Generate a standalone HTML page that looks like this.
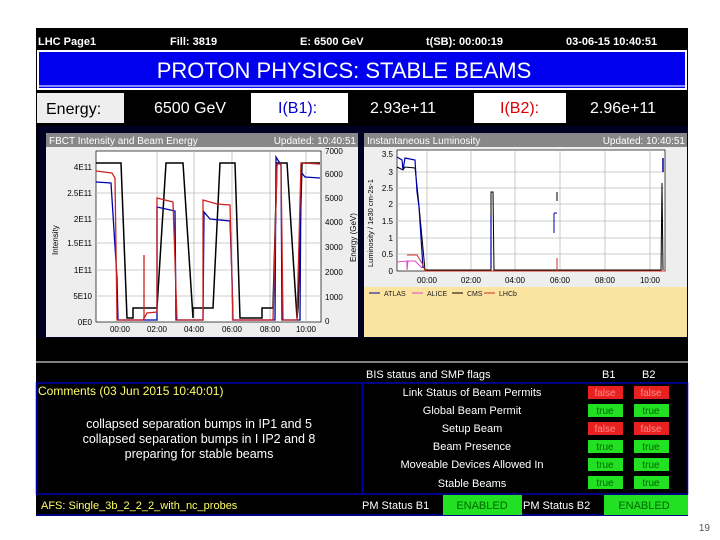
<!DOCTYPE html>
<html><head><meta charset="utf-8"><style>
body{margin:0;width:720px;height:540px;background:#fff;overflow:hidden;font-family:"Liberation Sans",sans-serif}
svg{position:absolute;left:0;top:0}
text{font-family:"Liberation Sans",sans-serif}
</style></head><body>
<svg width="720" height="540" viewBox="0 0 720 540">
<rect x="36" y="28" width="652" height="488" fill="#000"/>
<g fill="#fff" font-size="11" font-weight="bold">
<text x="38" y="45">LHC Page1</text>
<text x="170" y="45">Fill: 3819</text>
<text x="300" y="45">E:  6500 GeV</text>
<text x="426" y="45">t(SB): 00:00:19</text>
<text x="566" y="45">03-06-15 10:40:51</text>
</g>
<rect x="37" y="50" width="650" height="40" fill="#fff"/>
<rect x="39" y="52" width="646" height="36" fill="#0000ee"/>
<rect x="39" y="85" width="646" height="2" fill="#8888ff"/>
<text x="344" y="78" fill="#fff" font-size="22" text-anchor="middle">PROTON PHYSICS: STABLE BEAMS</text>
<rect x="37" y="93" width="87" height="30" fill="#eee"/>
<text x="46" y="114" font-size="16" fill="#000">Energy:</text>
<text x="154" y="113" font-size="16" fill="#fff">6500 GeV</text>
<rect x="251" y="93" width="97" height="30" fill="#fff"/>
<text x="278" y="113" font-size="16" fill="#0000cc">I(B1):</text>
<text x="370" y="113" font-size="16" fill="#fff">2.93e+11</text>
<rect x="474" y="93" width="92" height="30" fill="#fff"/>
<text x="500" y="113" font-size="16" fill="#dd0000">I(B2):</text>
<text x="590" y="113" font-size="16" fill="#fff">2.96e+11</text>
<rect x="38" y="126" width="650" height="212" fill="#000022"/>
<rect x="46" y="133" width="312" height="204" fill="#eee"/>
<rect x="46" y="133" width="312" height="14" fill="#888"/>
<text x="49" y="144" font-size="10" fill="#fff">FBCT Intensity and Beam Energy</text>
<text x="356" y="144" font-size="10" fill="#fff" text-anchor="end">Updated: 10:40:51</text>
<rect x="96" y="151" width="225" height="171" fill="#fff" stroke="#000" stroke-width="0.7"/>
<g stroke="#bbb" stroke-width="0.8">
<line x1="157" y1="151" x2="157" y2="322"/><line x1="194" y1="151" x2="194" y2="322"/><line x1="232" y1="151" x2="232" y2="322"/><line x1="270" y1="151" x2="270" y2="322"/><line x1="306" y1="151" x2="306" y2="322"/>
<line x1="96" y1="193" x2="321" y2="193"/><line x1="96" y1="219" x2="321" y2="219"/><line x1="96" y1="243" x2="321" y2="243"/><line x1="96" y1="270" x2="321" y2="270"/><line x1="96" y1="296" x2="321" y2="296"/>
</g>
<g font-size="8" fill="#000" text-anchor="end">
<text x="92" y="170">4E11</text><text x="92" y="196">2.5E11</text><text x="92" y="222">2E11</text><text x="92" y="246">1.5E11</text><text x="92" y="273">1E11</text><text x="92" y="299">5E10</text><text x="92" y="325">0E0</text>
</g>
<g font-size="8" fill="#000">
<text x="325" y="154">7000</text><text x="325" y="177">6000</text><text x="325" y="201">5000</text><text x="325" y="225">4000</text><text x="325" y="250">3000</text><text x="325" y="275">2000</text><text x="325" y="300">1000</text><text x="325" y="324">0</text>
</g>
<text font-size="8" transform="translate(58,255) rotate(-90)">Intensity</text>
<text font-size="8" transform="translate(356,262) rotate(-90)">Energy (GeV)</text>
<g font-size="8" fill="#000" text-anchor="middle">
<text x="120" y="332">00:00</text><text x="157" y="332">02:00</text><text x="194" y="332">04:00</text><text x="232" y="332">06:00</text><text x="270" y="332">08:00</text><text x="306" y="332">10:00</text>
</g>
<polyline fill="none" stroke="#000" stroke-width="1.5" points="96,163 121,163 127,318 133,318 133,308 157,308 166,163 183,163 193,318 193,308 213,308 220,163 235,163 240,318 262,318 262,308 273,308 277,163 287,163 297,318 298,308 302,163 320,163"/>
<polyline fill="none" stroke="#0000aa" stroke-width="1.3" points="96,182 111,183 117,278 118,320 157,320 157,207 175,211 176,320 203,320 204,212 210,219 230,221 232,278 233,320 275,320 276,157 281,165 282,320 300,320 301,172 305,177 320,178"/>
<polyline fill="none" stroke="#cc2222" stroke-width="1.3" points="96,171 112,173 115,178 117,320 143,320 147,313 157,312 157,198 173,202 177,320 203,320 203,200 217,204 230,205 233,320 273,320 277,164 281,164 283,320 297,320 301,163 320,164"/>
<line x1="144" y1="320" x2="144" y2="255" stroke="#cc2222" stroke-width="1.3"/>
<rect x="364" y="133" width="323" height="204" fill="#eee"/>
<rect x="364" y="133" width="323" height="14" fill="#888"/>
<text x="367" y="144" font-size="10" fill="#fff">Instantaneous Luminosity</text>
<text x="685" y="144" font-size="10" fill="#fff" text-anchor="end">Updated: 10:40:51</text>
<rect x="397" y="150" width="268" height="121" fill="#fff" stroke="#000" stroke-width="0.7"/>
<g stroke="#bbb" stroke-width="0.8">
<line x1="427" y1="150" x2="427" y2="271"/><line x1="471" y1="150" x2="471" y2="271"/><line x1="515" y1="150" x2="515" y2="271"/><line x1="560" y1="150" x2="560" y2="271"/><line x1="605" y1="150" x2="605" y2="271"/><line x1="650" y1="150" x2="650" y2="271"/>
<line x1="397" y1="172" x2="665" y2="172"/><line x1="397" y1="188" x2="665" y2="188"/><line x1="397" y1="204" x2="665" y2="204"/><line x1="397" y1="221" x2="665" y2="221"/><line x1="397" y1="238" x2="665" y2="238"/><line x1="397" y1="254" x2="665" y2="254"/>
</g>
<g font-size="8" fill="#000" text-anchor="end">
<text x="393" y="157">3.5</text><text x="393" y="175">3</text><text x="393" y="191">2.5</text><text x="393" y="207">2</text><text x="393" y="224">1.5</text><text x="393" y="241">1</text><text x="393" y="257">0.5</text><text x="393" y="274">0</text>
</g>
<text font-size="7.5" transform="translate(373,267) rotate(-90)">Luminosity / 1e30 cm-2s-1</text>
<g font-size="8" fill="#000" text-anchor="middle">
<text x="427" y="283">00:00</text><text x="471" y="283">02:00</text><text x="515" y="283">04:00</text><text x="560" y="283">06:00</text><text x="605" y="283">08:00</text><text x="650" y="283">10:00</text>
</g>
<polyline fill="none" stroke="#000" stroke-width="1" points="397,167 403,170 405,167 415,168 418,195 425,270 491,270 491,192 493,192 494,270 661,270 662,183 663,270"/>
<polyline fill="none" stroke="#0000aa" stroke-width="1.2" points="397,157 402,160 403,170 405,158 415,160 417,192 419,207 423,268"/>
<line x1="491" y1="268" x2="491" y2="215" stroke="#0000aa" stroke-width="1.2"/>
<line x1="554" y1="213" x2="554" y2="233" stroke="#0000aa" stroke-width="1"/>
<line x1="554" y1="213" x2="557" y2="213" stroke="#0000aa" stroke-width="1"/>
<line x1="557" y1="192" x2="557" y2="201" stroke="#000" stroke-width="1"/>
<line x1="663" y1="158" x2="663" y2="172" stroke="#0000aa" stroke-width="1.5"/>
<polyline fill="none" stroke="#dd44cc" stroke-width="1" points="397,262 407,261 407,270 408,261 415,261 422,268"/>
<polyline fill="none" stroke="#cc3322" stroke-width="1" points="407,255 417,255 423,265 425,271 665,271"/>
<line x1="557" y1="271" x2="557" y2="258" stroke="#cc3322" stroke-width="1"/>
<rect x="364" y="287" width="323" height="50" fill="#fbe3a0"/>
<g font-size="7" fill="#222">
<line x1="369" y1="293" x2="380" y2="293" stroke="#0000aa"/><text x="384" y="296">ATLAS</text>
<line x1="412" y1="293" x2="423" y2="293" stroke="#dd44cc"/><text x="427" y="296">ALICE</text>
<line x1="452" y1="293" x2="463" y2="293" stroke="#000"/><text x="467" y="296">CMS</text>
<line x1="484" y1="293" x2="495" y2="293" stroke="#cc3322"/><text x="499" y="296">LHCb</text>
</g>
<line x1="36" y1="362" x2="688" y2="362" stroke="#fff" stroke-width="1"/>
<text x="366" y="378" font-size="11" fill="#fff">BIS status and SMP flags</text>
<text x="602" y="378" font-size="11" fill="#fff">B1</text>
<text x="642" y="378" font-size="11" fill="#fff">B2</text>
<rect x="36.5" y="383" width="326" height="111" fill="none" stroke="#0000aa" stroke-width="1.5"/>
<rect x="362.5" y="383" width="325" height="111" fill="none" stroke="#0000aa" stroke-width="1.5"/>
<text x="38" y="395" font-size="12" fill="#ffff66">Comments (03 Jun  2015 10:40:01)</text>
<g font-size="12.5" fill="#fff" text-anchor="middle">
<text x="199" y="428">collapsed separation bumps in IP1 and 5</text>
<text x="199" y="443">collapsed separation bumps in I IP2 and 8</text>
<text x="199" y="458">preparing for stable beams</text>
</g>
<g font-size="11" fill="#fff" text-anchor="middle">
<text x="472" y="396">Link Status of Beam Permits</text>
<text x="472" y="414">Global Beam Permit</text>
<text x="472" y="432">Setup Beam</text>
<text x="472" y="450">Beam Presence</text>
<text x="472" y="468">Moveable Devices Allowed In</text>
<text x="472" y="487">Stable Beams</text>
</g>
<g font-size="10" text-anchor="middle">
<rect x="588" y="386" width="35" height="13" fill="#e82020"/><text x="605" y="396" fill="#f88">false</text>
<rect x="634" y="386" width="35" height="13" fill="#e82020"/><text x="651" y="396" fill="#f88">false</text>
<rect x="588" y="404" width="35" height="13" fill="#22e022"/><text x="605" y="414" fill="#060">true</text>
<rect x="634" y="404" width="35" height="13" fill="#22e022"/><text x="651" y="414" fill="#060">true</text>
<rect x="588" y="422" width="35" height="13" fill="#e82020"/><text x="605" y="432" fill="#f88">false</text>
<rect x="634" y="422" width="35" height="13" fill="#e82020"/><text x="651" y="432" fill="#f88">false</text>
<rect x="588" y="440" width="35" height="13" fill="#22e022"/><text x="605" y="450" fill="#060">true</text>
<rect x="634" y="440" width="35" height="13" fill="#22e022"/><text x="651" y="450" fill="#060">true</text>
<rect x="588" y="458" width="35" height="13" fill="#22e022"/><text x="605" y="468" fill="#060">true</text>
<rect x="634" y="458" width="35" height="13" fill="#22e022"/><text x="651" y="468" fill="#060">true</text>
<rect x="588" y="476" width="35" height="13" fill="#22e022"/><text x="605" y="486" fill="#060">true</text>
<rect x="634" y="476" width="35" height="13" fill="#22e022"/><text x="651" y="486" fill="#060">true</text>
</g>
<line x1="36" y1="515" x2="688" y2="515" stroke="#0000aa" stroke-width="1.5"/>
<text x="41" y="509" font-size="11" fill="#ffff66">AFS: Single_3b_2_2_2_with_nc_probes</text>
<text x="362" y="509" font-size="11" fill="#fff">PM Status B1</text>
<rect x="443" y="495" width="79" height="20" fill="#22e022"/>
<text x="482" y="509" font-size="11" fill="#060" text-anchor="middle">ENABLED</text>
<text x="523" y="509" font-size="11" fill="#fff">PM Status B2</text>
<rect x="604" y="495" width="84" height="20" fill="#22e022"/>
<text x="644" y="509" font-size="11" fill="#060" text-anchor="middle">ENABLED</text>
<text x="710" y="531" font-size="10" fill="#555" text-anchor="end">19</text>
</svg>
</body></html>
